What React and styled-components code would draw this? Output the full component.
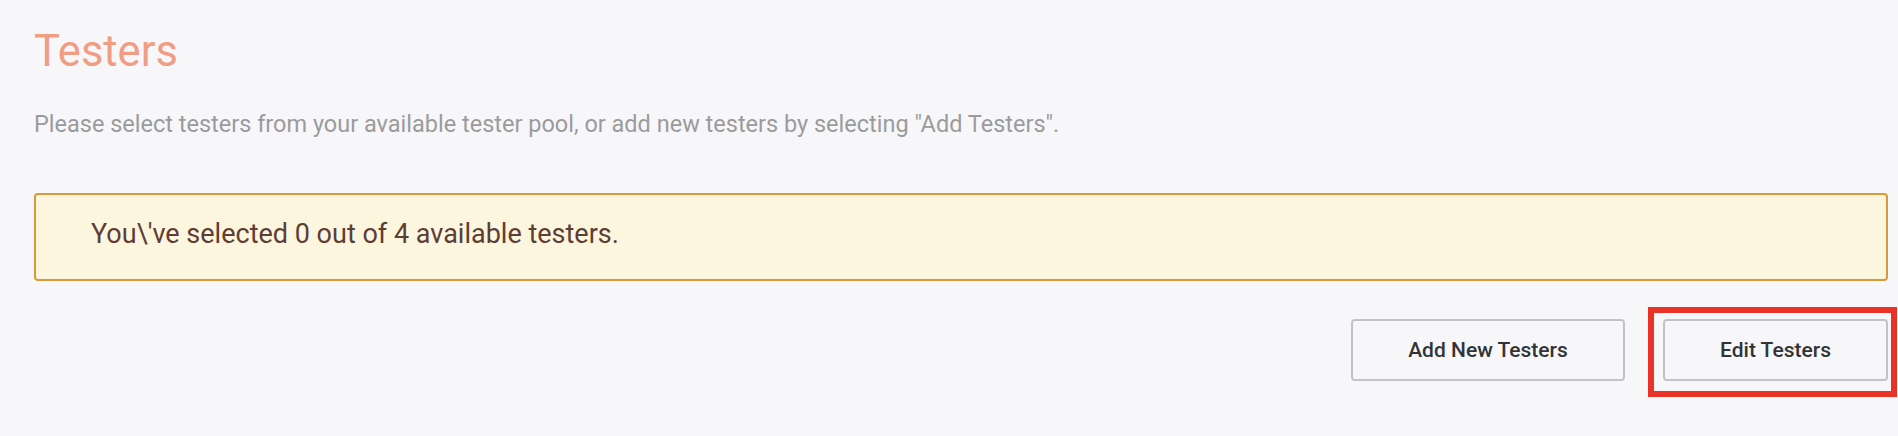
import React from "react";
import styled, { createGlobalStyle } from "styled-components";

const GlobalStyle = createGlobalStyle`
	html, body {
		margin: 0;
		padding: 0;
		background: #f7f7f9;
	}
	body {
		font-family: Roboto, "Liberation Sans", Arial, sans-serif;
	}
`;

export default function App() {
	const selected = 0;
	const available = 4;

	return (
		<>
			<GlobalStyle />
			<Page>
				<Title>Testers</Title>
				<Description>
					Please select testers from your available tester pool, or add new testers by selecting "Add
					Testers".
				</Description>
				<Notice>
					You\'ve selected {selected} out of {available} available testers.
				</Notice>
				<Actions>
					<Button>Add New Testers</Button>
					<Highlighted>
						<Button $wide={false}>Edit Testers</Button>
					</Highlighted>
				</Actions>
			</Page>
		</>
	);
}

const Page = styled.div`
	padding: 26px 10px 0 34px;
	height: 436px;
	box-sizing: border-box;
`;

const Title = styled.h1`
	margin: 0;
	font-size: 43.5px;
	line-height: 52px;
	font-weight: 400;
	color: #f09d84;
`;

const Description = styled.p`
	margin: 32px 0 0;
	font-size: 23.5px;
	line-height: 28px;
	color: #9b9b9d;
`;

const Notice = styled.div`
	margin-top: 55px;
	border: 2px solid #d99a3c;
	border-radius: 4px;
	background: #fdf6df;
	padding: 23px 55px 29px;
	font-size: 27px;
	line-height: 32px;
	color: #5e3d33;
`;

const Actions = styled.div`
	display: flex;
	justify-content: flex-end;
	gap: 38px;
	margin-top: 38px;
`;

const Button = styled.button`
	height: 62px;
	width: ${(p) => (p.$wide === false ? "225px" : "274px")};
	box-sizing: border-box;
	border: 2px solid #c2c3c8;
	border-radius: 4px;
	background: #f7f7f9;
	font-family: Roboto, "Liberation Sans", Arial, sans-serif;
	font-size: 21px;
	font-weight: 500;
	color: #333335;
	cursor: pointer;
`;

const Highlighted = styled.div`
	position: relative;
	display: flex;

	&::after {
		content: "";
		position: absolute;
		left: -15px;
		right: -9px;
		top: -12px;
		bottom: -16px;
		border: 6px solid #ea3326;
		pointer-events: none;
	}
`;
